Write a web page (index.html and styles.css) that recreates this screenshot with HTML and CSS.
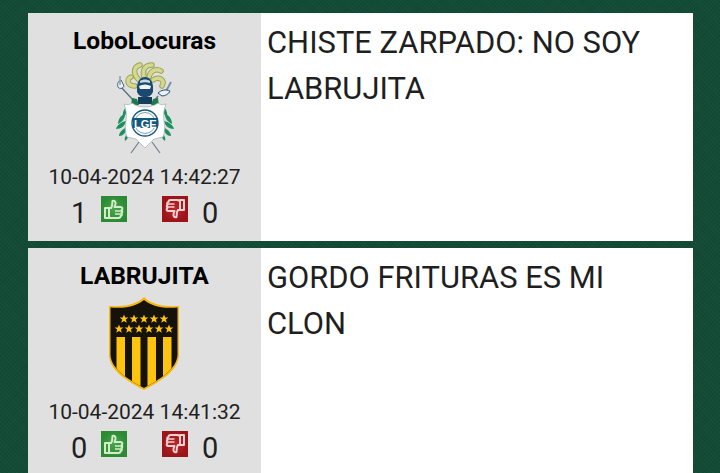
FILE: index.html
```html
<!DOCTYPE html>
<html lang="es">
<head>
    <meta charset="UTF-8">
    <meta name="viewport" content="width=device-width, initial-scale=1.0">
    <title>Foro</title>
    <link rel="stylesheet" href="styles.css">
</head>
<body>
    <svg class="defs" width="0" height="0">
        <defs>
            <radialGradient id="up-bg">
                <stop offset="0" stop-color="#4aa648"/>
                <stop offset="1" stop-color="#2c8a34"/>
            </radialGradient>
            <radialGradient id="down-bg">
                <stop offset="0" stop-color="#b8282c"/>
                <stop offset="1" stop-color="#9a141a"/>
            </radialGradient>
            <symbol id="thumb-up" viewBox="0 0 26 26">
                <rect width="26" height="26" fill="url(#up-bg)"/>
                <path d="M4 12h4v10H4z M8 12h2l1-2 .5-5c2-1 3.500 1 3 3l-1 3h6c2 0 2.500 2 1 3 1 1 1 2.500 0 3 .8 1 .3 3-1 3 0 2-1 2-2 2h-8l-2-1" fill="none" stroke="#d3edca" stroke-width="2" stroke-linejoin="round"/>
                <path d="M14 15h7M14 18h6" stroke="#d3edca" stroke-width="1.500"/>
            </symbol>
            <symbol id="thumb-down" viewBox="0 0 26 26">
                <rect width="26" height="26" fill="url(#down-bg)"/>
                <path d="M18 14h4V4h-4z M18 14h-2l-1 2-.5 5c-2 1-3.500-1-3-3l1-3H6.500c-2 0-2.500-2-1-3-1-1-1-2.500 0-3-.8-1-.3-3 1-3 0-2 1-2 2-2h7l2.500 1" fill="none" stroke="#f4d0d0" stroke-width="2" stroke-linejoin="round"/>
                <path d="M5.500 8h7M5.500 11h7" stroke="#f4d0d0" stroke-width="1.500"/>
            </symbol>
            <polygon id="star" points="0,-4.500 1.200,-1.400 4.400,-1.400 1.800,.6 2.800,3.800 0,1.900 -2.800,3.800 -1.800,.6 -4.400,-1.400 -1.200,-1.400"/>
            <clipPath id="shield-clip">
                <path d="M36 3C30 8 20 12 2.500 10.500V58C3 72 21 83 36 91 51 83 69 72 69.500 58V10.500C52 12 42 8 36 3Z"/>
            </clipPath>
            <g id="laurel" fill="#1c9060">
                <path d="M13 44C9 46 7 51 8 55 11 53 13 49 13 44Z"/>
                <path d="M10 52C6 53 3 57 3 62 7 60 10 57 10 52Z"/>
                <path d="M11 59C6 60 2 63 1 67 6 67 10 64 11 59Z"/>
                <path d="M12 65C8 67 4 70 4 74 8 74 11 71 12 65Z"/>
                <path d="M14 70C11 72 9 76 10 79 13 77 14 74 14 70Z"/>
            </g>
        </defs>
    </svg>

    <div class="post">
        <div class="author">
            <div class="name">LoboLocuras</div>
            <svg class="avatar" width="60" height="93" viewBox="0 0 60 93">
                <!-- plumas -->
                <g fill="none" stroke-linecap="round">
                    <g stroke="#9ca255" stroke-width="5.500">
                        <path d="M20 24C12 24 11 17 16 15"/>
                        <path d="M24 18C18 12 18 5 25 3"/>
                        <path d="M29 15C27 8 30 3 37 3"/>
                        <path d="M34 15C35 9 41 6 46 9"/>
                        <path d="M38 18C44 14 51 18 47 24"/>
                    </g>
                    <g stroke="#d5d990" stroke-width="3.500">
                        <path d="M20 24C12 24 11 17 16 15"/>
                        <path d="M24 18C18 12 18 5 25 3"/>
                        <path d="M29 15C27 8 30 3 37 3"/>
                        <path d="M34 15C35 9 41 6 46 9"/>
                        <path d="M38 18C44 14 51 18 47 24"/>
                    </g>
                </g>
                <!-- espadas -->
                <path d="M5 24l14 15" stroke="#5f7888" stroke-width="1.600"/>
                <path d="M3 25c-1-3 0-6 3-7l3 6c-1 3-5 3-6 1z" fill="#eef2f4" stroke="#41617a"/>
                <path d="M5 14v9" stroke="#8c9ea9" stroke-width="1.500"/>
                <path d="M56 20l-6 11" stroke="#7d93a2" stroke-width="2"/>
                <path d="M43 31c3-3 8-4 12-2-1 3-5 5-8 5z" fill="#eef2f4" stroke="#1c4f78"/>
                <path d="M43 34l-5 7" stroke="#5f7888" stroke-width="1.600"/>
                <!-- casco -->
                <path d="M23 42v-7h14v7z" fill="#143e5e"/>
                <path d="M22 24c1-6 4-9 8-9s7 3 8 9v6c-2 4-4 5-8 5s-6-1-8-5z" fill="#1a4a70"/>
                <path d="M24 24c4-2 8-2 12 0l-1 3H25z" fill="#eef3f5"/>
                <path d="M25 19c3-2 7-2 10 0v2c-3-1-7-1-10 0z" fill="#c6d8e2"/>
                <path d="M17 36l5 1 2 6-8 1z" fill="#1d7a4a"/>
                <path d="M43 36l-5 1-2 6 8 1z" fill="#1d7a4a"/>
                <!-- hojas -->
                <use href="#laurel"/>
                <use href="#laurel" transform="translate(60 0) scale(-1 1)"/>
                <!-- escudo -->
                <path d="M16 91l8-11M45 91l-8-11" stroke="#6f7e86" stroke-width="1.200"/>
                <path d="M9 42c3 1 6 1 8-1 4 3 9 4 13 4s9-1 13-4c2 2 5 2 8 1-2 5-3 11-2 17 1 6 1 11-1 16l-9 2-9 9-9-9-9-2c-2-5-2-10-1-16 1-6 0-12-2-17z" fill="#fff" stroke="#a4aeb4" stroke-width=".7"/>
                <circle cx="30" cy="61" r="13" fill="#fff" stroke="#1c5a80" stroke-width="1.400"/>
                <circle cx="30" cy="61" r="10.500" fill="none" stroke="#7ba3b8" stroke-width="1"/>
                <rect x="18" y="56" width="25" height="10" fill="#14587c"/>
                <text x="19" y="65.500" class="crest-letters">LGE</text>
            </svg>
            <div class="date">10-04-2024 14:42:27</div>
            <div class="votes">
                <span class="count">1</span>
                <svg class="thumb" width="26" height="26"><use href="#thumb-up"/></svg>
                <svg class="thumb thumb-down" width="26" height="26"><use href="#thumb-down"/></svg>
                <span class="count">0</span>
            </div>
        </div>
        <div class="message">CHISTE ZARPADO: NO SOY LABRUJITA</div>
    </div>

    <div class="post">
        <div class="author">
            <div class="name">LABRUJITA</div>
            <svg class="avatar avatar-shield" width="72" height="93" viewBox="0 0 72 93">
                <path d="M36 0C30 6 20 10 1 9V58C1 73 20 85 36 93 52 85 71 73 71 58V9C52 10 42 6 36 0Z" fill="#f6b80f"/>
                <path d="M36 3C30 8 20 12 2.500 10.500V58C3 72 21 83 36 91 51 83 69 72 69.500 58V10.500C52 12 42 8 36 3Z" fill="#15120c"/>
                <g clip-path="url(#shield-clip)" fill="#fdc30f">
                    <rect x="8.500" y="40" width="8.500" height="50"/>
                    <rect x="24" y="40" width="8.500" height="50"/>
                    <rect x="39.500" y="40" width="8.500" height="50"/>
                    <rect x="55" y="40" width="8.500" height="50"/>
                </g>
                <g fill="#fdc30f">
                    <use href="#star" x="16" y="22"/>
                    <use href="#star" x="26" y="22"/>
                    <use href="#star" x="36" y="22"/>
                    <use href="#star" x="46" y="22"/>
                    <use href="#star" x="56" y="22"/>
                    <use href="#star" x="11" y="32"/>
                    <use href="#star" x="21" y="32"/>
                    <use href="#star" x="31" y="32"/>
                    <use href="#star" x="41" y="32"/>
                    <use href="#star" x="51" y="32"/>
                    <use href="#star" x="61" y="32"/>
                </g>
            </svg>
            <div class="date">10-04-2024 14:41:32</div>
            <div class="votes">
                <span class="count">0</span>
                <svg class="thumb" width="26" height="26"><use href="#thumb-up"/></svg>
                <svg class="thumb thumb-down" width="26" height="26"><use href="#thumb-down"/></svg>
                <span class="count">0</span>
            </div>
        </div>
        <div class="message">GORDO FRITURAS ES MI CLON</div>
    </div>
</body>
</html>
```

FILE: styles.css
```css
html, body {
    height: 100%;
}

body {
    margin: 0;
    padding: 13px 27px 0 28px;
    box-sizing: border-box;
    overflow: hidden;
    background-color: #134b37;
    background-image:
        repeating-linear-gradient(45deg, rgba(255, 255, 255, 0.02) 0 1px, transparent 1px 3px),
        repeating-linear-gradient(-45deg, rgba(0, 0, 0, 0.05) 0 1px, transparent 1px 3px);
    color: #1f1f1f;
    font-family: Roboto, Arial, sans-serif;
}

.defs {
    display: block;
    height: 0;
}

.post {
    display: flex;
    height: 228px;
    margin-bottom: 7px;
    background-color: #fff;
}

.author {
    display: flex;
    flex-direction: column;
    align-items: center;
    flex: 0 0 233px;
    padding-top: 15px;
    box-sizing: border-box;
    background-color: #e0e0e0;
}

.name {
    height: 26px;
    line-height: 26px;
    font-size: 24.6px;
    font-weight: 700;
    color: #000;
}

.avatar {
    display: block;
    margin-top: 8px;
}

.avatar-shield {
    margin-right: 2px;
}

.crest-letters {
    font-family: "Liberation Sans", Arial, sans-serif;
    font-size: 11px;
    font-weight: 700;
    fill: #fff;
}

.date {
    margin-top: 10px;
    line-height: 24px;
    font-size: 21px;
}

.votes {
    display: flex;
    align-items: flex-start;
    margin-top: 7px;
}

.count {
    width: 16px;
    margin-top: 1px;
    line-height: 32px;
    font-size: 29px;
}

.thumb {
    display: block;
    margin-left: 14px;
}

.thumb-down {
    margin-left: 35px;
    margin-right: 14px;
}

.message {
    flex: 1;
    padding: 7px 6px;
    line-height: 46px;
    font-size: 30.9px;
}
```
